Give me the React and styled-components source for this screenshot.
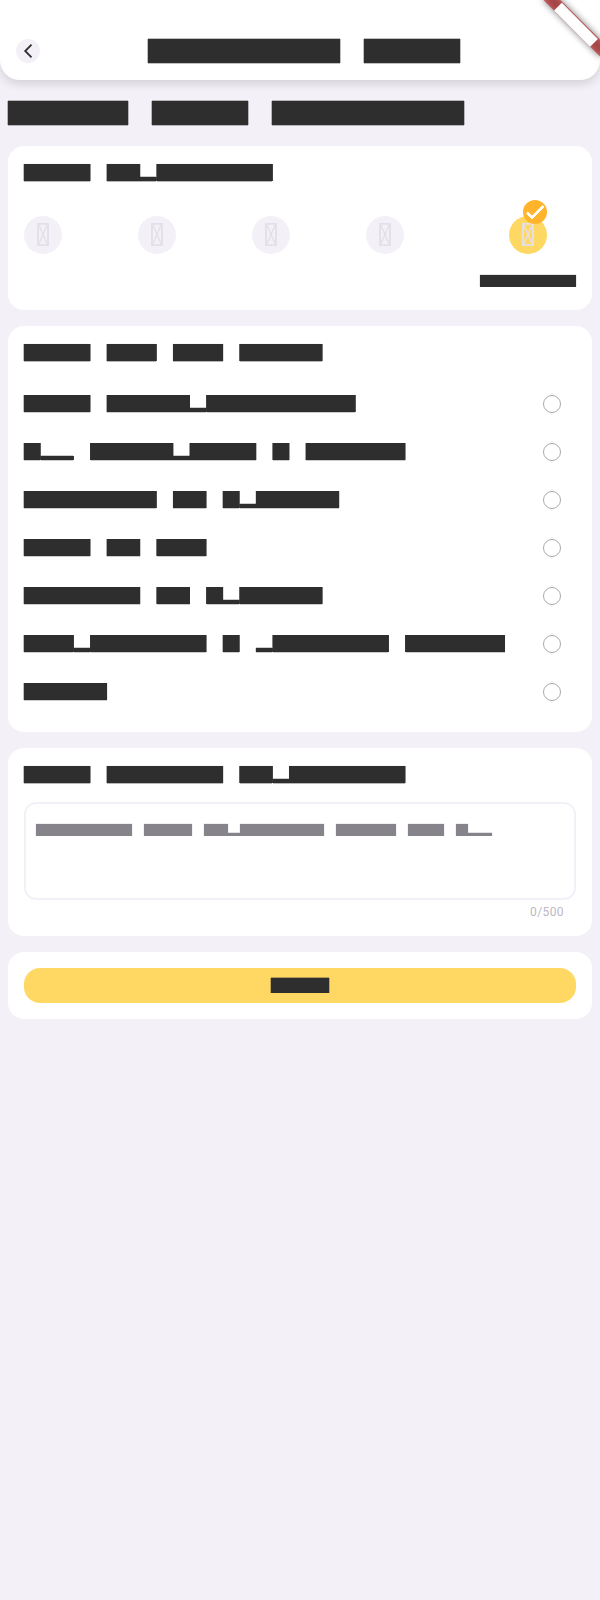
import React from "react";
import styled, { createGlobalStyle } from "styled-components";

const GlobalStyle = createGlobalStyle`
  * { box-sizing: border-box; }
  html, body { margin: 0; background: #f3f0f8; }
  body { font-family: Roboto, "Liberation Sans", sans-serif; }
`;

const Screen = styled.div`
  position: relative;
  min-height: 1600px;
  overflow: hidden;
  background: #f3f0f8;
`;

const Header = styled.header`
  display: flex;
  align-items: center;
  height: 80px;
  padding: 22px 16px 0;
  border-radius: 0 0 20px 20px;
  background: #fff;
  box-shadow: 0 4px 10px rgba(0, 0, 0, 0.13);
`;

const BackButton = styled.button`
  display: flex;
  flex: none;
  width: 24px;
  height: 24px;
  margin-right: 108px;
  padding: 0;
  border: 0;
  border-radius: 50%;
  background: #f3f0f8;
`;

const Content = styled.main`
  display: flex;
  flex-direction: column;
  gap: 16px;
  padding: 21px 8px 0;
`;

const Heading = styled.h1`
  height: 29px;
  margin: 0;
`;

const Card = styled.section`
  height: ${(p) => p.$height}px;
  padding: ${(p) => p.$top ?? 18}px 16px 0;
  border-radius: 16px;
  background: #fff;
`;

const Line = styled.span`
  display: flex;
  align-items: flex-end;
  flex: none;
  width: ${(p) => (p.$width ? `${p.$width}px` : "auto")};
  height: ${(p) => p.$height}px;
`;

const Run = styled.span`
  flex: none;
  width: ${(p) => p.$width}px;
  height: ${(p) => p.$height}px;
  margin-left: ${(p) => p.$gap}px;
  background: rgb(${(p) => p.$rgb});
  box-shadow:
    -1px 0 rgba(${(p) => p.$rgb}, ${(p) => p.$left}),
    1px 0 rgba(${(p) => p.$rgb}, ${(p) => p.$right}),
    0 -1px rgba(${(p) => p.$rgb}, ${(p) => p.$over}),
    0 1px rgba(${(p) => p.$rgb}, ${(p) => p.$under});
`;

const faces = {
  display: { size: 24, step: 24, offset: -0.3, overhang: 0.6, over: 0.3, under: 0.3, low: 6 },
  title: { size: 17, step: 16.58, offset: -0.3, overhang: 0.5, over: 0.03, under: 0.35, low: 4 },
  option: { size: 17, step: 16.58, offset: -0.3, overhang: 0.5, over: 0, under: 0.25, low: 4 },
  small: { size: 12, step: 12, offset: -0.1, overhang: 0.2, over: 0.13, under: 0, low: 3 },
  button: { size: 15, step: 14.65, offset: 0.7, overhang: 0, over: 0.35, under: 0, low: 4 },
};

/* "#" is a full block, "_" a low block, and a space leaves one cell empty. */
function Blocks({ text, face, width, rgb = "46, 46, 46" }) {
  const f = faces[face];
  let cursor = 0;
  const runs = [...text.matchAll(/#+|_+/g)].map((m) => {
    const start = f.offset + m.index * f.step;
    const end = start + m[0].length * f.step + f.overhang;
    const x0 = Math.ceil(start - 0.001);
    const x1 = Math.floor(end + 0.001);
    const low = m[0][0] === "_";
    const run = (
      <Run
        key={m.index}
        $gap={x0 - cursor}
        $width={x1 - x0}
        $height={low ? f.low : f.size}
        $rgb={rgb}
        $left={Math.max(0, x0 - start).toFixed(2)}
        $right={Math.max(0, end - x1).toFixed(2)}
        $over={low ? 0.25 : f.over}
        $under={f.under}
      />
    );
    cursor = x1;
    return run;
  });
  return <Line $height={f.size} $width={width}>{runs}</Line>;
}

const Ratings = styled.div`
  display: flex;
  justify-content: space-between;
  margin-top: 35px;
`;

const Rating = styled.div`
  display: flex;
  flex-direction: column;
  align-items: center;
  gap: 21px;
  width: ${(p) => (p.$wide ? 96 : 38)}px;
`;

const Face = styled.div`
  position: relative;
  display: flex;
  justify-content: center;
  width: 38px;
  height: 38px;
  padding-top: 7px;
  border-radius: 50%;
  background: ${(p) => (p.$selected ? "#ffd864" : "#f3f0f8")};
`;

const Badge = styled.span`
  position: absolute;
  top: -16px;
  right: 0;
  width: 24px;
  height: 24px;
  border-radius: 50%;
  background: #ffb42c;
`;

const Glyph = () => (
  <svg width="12" height="23" viewBox="0 0 12 23" fill="none" stroke="#e4e0e8">
    <rect x="1" y="0.8" width="10" height="21.4" strokeWidth="1.9" />
    <path d="M1.6 1.5 10.4 21.5M10.4 1.5 1.6 21.5" strokeWidth="1.4" />
  </svg>
);

const Options = styled.ul`
  display: flex;
  flex-direction: column;
  gap: 30px;
  margin: 34px 0 0;
  padding: 0 15px 0 0;
  list-style: none;
`;

const Option = styled.li`
  display: flex;
  align-items: flex-start;
  justify-content: space-between;
  height: 18px;
`;

const Radio = styled.span`
  flex: none;
  width: 18px;
  height: 18px;
  border: 1px solid #aaa;
  border-radius: 50%;
`;

const Field = styled.div`
  height: 98px;
  margin-top: 19px;
  padding: 20px 10px;
  border: 2px solid #f3f0f8;
  border-radius: 12px;
`;

const Counter = styled.div`
  margin-top: 4px;
  padding-right: 12px;
  color: #bcb7c4;
  font-size: 12px;
  line-height: 16px;
  letter-spacing: 0.4px;
  text-align: right;
`;

const Submit = styled.button`
  display: flex;
  justify-content: center;
  width: 100%;
  height: 35px;
  padding: 10px 0 0;
  border: 0;
  border-radius: 16px;
  background: #ffd864;
`;

const Corner = styled.div`
  position: absolute;
  top: 0;
  right: 0;
  width: 80px;
  height: 80px;
  overflow: hidden;
`;

const Ribbon = styled.div`
  position: absolute;
  top: 0;
  left: 100%;
  display: flex;
  align-items: center;
  justify-content: center;
  width: 80px;
  height: 12px;
  transform-origin: 0 0;
  transform: rotate(45deg) translate(-40px, 28px);
  background: ${(p) => (p.$shadow ? "rgba(0, 0, 0, 0.5)" : "rgba(183, 28, 28, 0.627)")};
  filter: ${(p) => (p.$shadow ? "blur(3.96px)" : "none")};
`;

const RibbonLabel = styled.span`
  width: 51px;
  height: 10.2px;
  margin-top: 1px;
  background: #fff;
`;

const options = [
  "#### #####_#########",
  "#__ #####_#### # ######",
  "######## ## #_#####",
  "#### ## ###",
  "####### ## #_#####",
  "###_####### # _####### ######",
  "#####",
];

export default function App() {
  return (
    <Screen>
      <GlobalStyle />
      <Header>
        <BackButton aria-label="Back">
          <svg width="24" height="24" viewBox="0 0 24 24" fill="none" stroke="#2e2e2e" strokeWidth="1.8">
            <path d="M15.5 5.7 9.2 12l6.3 6.3" />
          </svg>
        </BackButton>
        <Blocks face="display" text="######## ####" />
      </Header>
      <Content>
        <Heading>
          <Blocks face="display" text="##### #### ########" />
        </Heading>
        <Card $height={164}>
          <Blocks face="title" text="#### ##_#######" />
          <Ratings>
            {[0, 1, 2, 3].map((i) => (
              <Rating key={i}>
                <Face><Glyph /></Face>
              </Rating>
            ))}
            <Rating $wide>
              <Face $selected>
                <Glyph />
                <Badge>
                  <svg width="24" height="24" viewBox="0 0 24 24" fill="#fff" stroke="#fff" strokeWidth="0.9">
                    <path d="M9 16.17 4.83 12l-1.42 1.41L9 19 21 7l-1.41-1.41z" />
                  </svg>
                </Badge>
              </Face>
              <Blocks face="small" text="########" />
            </Rating>
          </Ratings>
        </Card>
        <Card $height={406}>
          <Blocks face="title" text="#### ### ### #####" />
          <Options>
            {options.map((text) => (
              <Option key={text}>
                <Blocks face="option" text={text} />
                <Radio />
              </Option>
            ))}
          </Options>
        </Card>
        <Card $height={188}>
          <Blocks face="title" text="#### ####### ##_#######" />
          <Field>
            <Blocks face="small" text="######## #### ##_####### ##### ### #__" rgb="134, 131, 138" />
          </Field>
          <Counter>0/500</Counter>
        </Card>
        <Card $height={67} $top={16}>
          <Submit aria-label="Submit">
            <Blocks face="button" text="####" width={60} />
          </Submit>
        </Card>
      </Content>
      <Corner>
        <Ribbon $shadow />
        <Ribbon>
          <RibbonLabel />
        </Ribbon>
      </Corner>
    </Screen>
  );
}
